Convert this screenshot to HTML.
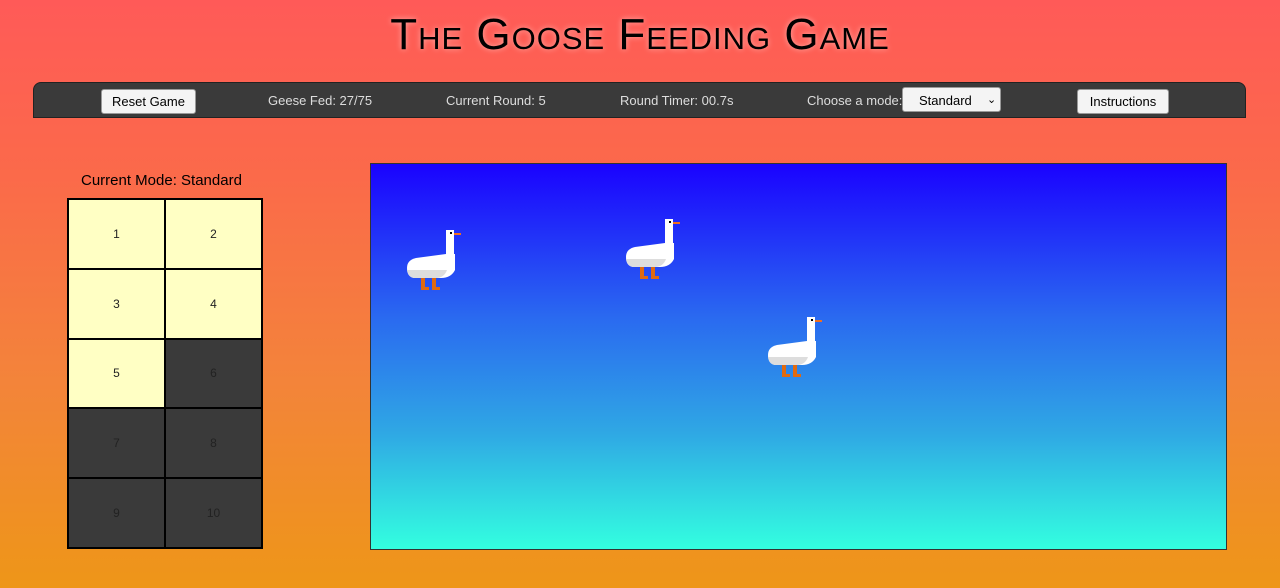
<!DOCTYPE html>
<html><head><style>
body{margin:0;width:1280px;height:588px;overflow:hidden;background:linear-gradient(#ff5a58,#fb6a4a 30%,#f3843a 65%,#ee9618);font-family:"Liberation Sans",sans-serif;position:relative}
h1{position:absolute;top:10px;left:0;width:1280px;text-align:center;margin:0;font-size:44px;font-variant:small-caps;font-weight:normal;letter-spacing:1px;text-shadow:0 0 6px rgba(255,255,255,.5);color:#000}
.nav{position:absolute;left:33px;top:82px;width:1211px;height:34px;background:#3a3a3a;border:1px solid #222;border-radius:8px 8px 0 0}
.nav span{position:absolute;top:10px;color:#ddd;font-size:13px}
.btn{position:absolute;top:6px;height:23px;background:#f4f4f4;border-radius:3px;border:1px solid #999;font-size:13px;color:#000;text-align:center;line-height:23px}
.mode{position:absolute;left:81px;top:172px;font-size:15px}
.grid{position:absolute;left:67px;top:198px;width:196px;height:351px;background:#000;display:grid;grid-template-columns:1fr 1fr;grid-gap:2px;box-sizing:border-box;border:2px solid #000;grid-template-rows:repeat(5,1fr)}
.grid div{display:flex;align-items:center;justify-content:center;font-size:12px;color:#222}
.l{background:#ffffc4}.d{background:#3a3a3a}
.cv{position:absolute;left:370px;top:163px;width:855px;height:385px;border:1px solid #333;background:linear-gradient(#1a02ff,#2a6af0 40%,#2fa8e4 70%,#33ffe0)}
.g{position:absolute;width:56px;height:64px}
</style></head><body>
<h1>The Goose Feeding Game</h1>
<div class="nav">
<div class="btn" style="left:67px;width:93px">Reset Game</div>
<span style="left:234px">Geese Fed: 27/75</span>
<span style="left:412px">Current Round: 5</span>
<span style="left:586px">Round Timer: 00.7s</span>
<span style="left:773px">Choose a mode:</span>
<div class="btn" style="left:868px;width:99px;top:4px;height:25px;line-height:25px;text-align:left;padding-left:16px;box-sizing:border-box">Standard <span style="position:absolute;left:84px;top:0;color:#000;font-size:11px">&#8964;</span></div>
<div class="btn" style="left:1043px;width:90px">Instructions</div>
</div>
<div class="mode">Current Mode: Standard</div>
<div class="grid">
<div class="l">1</div><div class="l">2</div><div class="l">3</div><div class="l">4</div><div class="l">5</div><div class="d">6</div><div class="d">7</div><div class="d">8</div><div class="d">9</div><div class="d">10</div>
</div>
<div class="cv"></div>
<svg width="0" height="0" style="position:absolute"><defs><g id="goose">
<rect x="40" y="2" width="8" height="30" fill="#fff"/>
<rect x="44" y="4" width="2" height="2" fill="#000"/>
<rect x="48" y="5" width="7" height="2" fill="#f07020"/>
<path d="M1 40 Q1 32 10 30 L40 26 L49 26 L49 42 Q45 50 35 50 L8 50 Q1 49 1 40Z" fill="#fff"/>
<path d="M1 42 L41 42 Q38 50 30 50 L8 50 Q2 49 1 42Z" fill="#ddd"/>
<rect x="15" y="50" width="4" height="12" fill="#e06a10"/>
<rect x="26" y="50" width="4" height="12" fill="#e06a10"/>
<rect x="15" y="59" width="8" height="3" fill="#e06a10"/>
<rect x="26" y="59" width="8" height="3" fill="#e06a10"/>
</g></defs></svg>
<svg class="g" style="left:406px;top:228px" viewBox="0 0 56 64"><use href="#goose"/></svg>
<svg class="g" style="left:625px;top:217px" viewBox="0 0 56 64"><use href="#goose"/></svg>
<svg class="g" style="left:767px;top:315px" viewBox="0 0 56 64"><use href="#goose"/></svg>
</body></html>
